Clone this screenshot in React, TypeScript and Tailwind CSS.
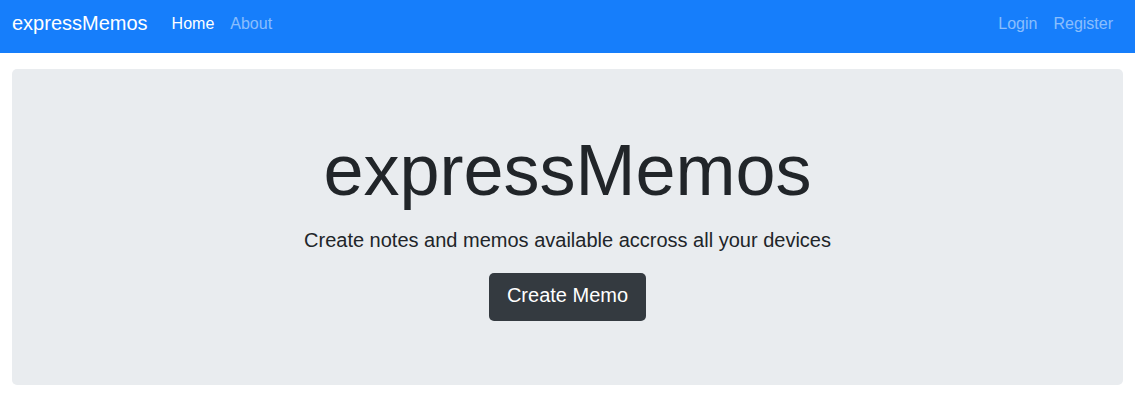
export default function App() {
  return (
    <div className="min-h-[400px] bg-white" style={{ fontFamily: '"Liberation Sans", Arial, sans-serif' }}>
      <nav className="flex h-[53px] items-start bg-[#167efb] pl-3 pr-[14px] pt-2">
        <a className="mr-4 text-[20px] leading-[30px] text-white">expressMemos</a>
        <ul className="mt-1 flex text-[16px] leading-6">
          <li className="px-2 text-white">Home</li>
          <li className="px-2 text-white/50">About</li>
        </ul>
        <ul className="ml-auto mt-1 flex text-[16px] leading-6">
          <li className="px-2 text-white/50">Login</li>
          <li className="px-2 text-white/50">Register</li>
        </ul>
      </nav>
      <div className="mx-3 mt-4 rounded-[5px] bg-[#e9ecef] px-8 pb-16 pt-[58px] text-center text-[#212529]">
        <h1 className="mb-3 text-[72px] font-light leading-[1.2]">expressMemos</h1>
        <p className="mb-[18px] text-[20px] leading-[30px]">Create notes and memos available accross all your devices</p>
        <button className="h-12 rounded-[5px] bg-[#343a40] px-[17.5px] pb-1 text-[20px] leading-[30px] text-white">Create Memo</button>
      </div>
    </div>
  );
}
